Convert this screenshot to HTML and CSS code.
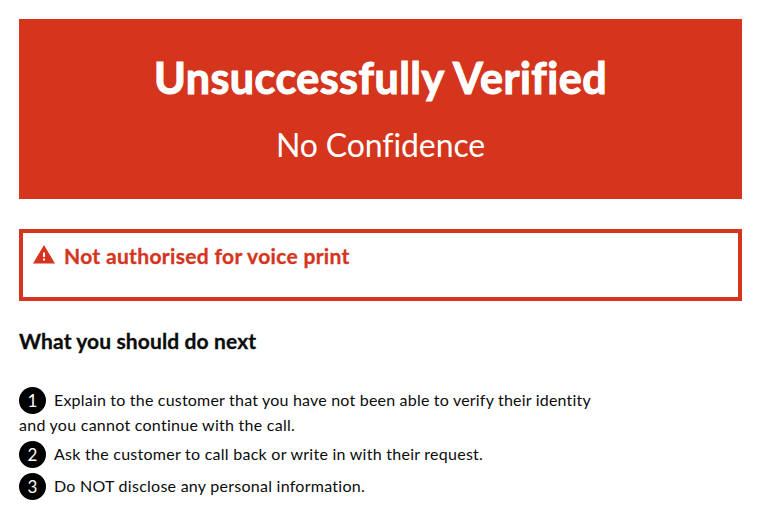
FILE: index.html
```html
<!DOCTYPE html>
<html lang="en">
<head>
<meta charset="utf-8">
<title>Verification result</title>
<link rel="stylesheet" href="styles.css">
</head>
<body>
<main>
<section class="panel">
<h1>Unsuccessfully Verified</h1>
<p>No Confidence</p>
</section>
<section class="notice">
<svg class="warning" viewBox="0 0 22 19" aria-hidden="true"><path fill="#d4351c" d="M11 0 22 18.5H0z"/><path fill="#fff" d="M10 7.5h2v4.5h-2zM10 13.5h2v2h-2z"/></svg>
<strong>Not authorised for voice print</strong>
</section>
<h2>What you should do next</h2>
<ol>
<li><span class="num">1</span><span class="first">Explain to the customer that you have not been able to verify their identity</span><br>and you cannot continue with the call.</li>
<li><span class="num">2</span>Ask the customer to call back or write in with their request.</li>
<li><span class="num">3</span>Do NOT disclose any personal information.</li>
</ol>
</main>
</body>
</html>
```
FILE: styles.css
```css
* { box-sizing: border-box; }
body { margin: 0; background: #fff; color: #0b0c0c; font-family: Lato, "Open Sans", sans-serif; font-variant-ligatures: none; }
main { padding: 19px 22px 0 19px; }
h1, h2, p, ol { margin: 0; padding: 0; }
.panel { height: 180px; padding-top: 31px; background: #d4351c; color: #fff; text-align: center; }
.panel h1 { font-size: 43px; line-height: 55px; font-weight: 700; letter-spacing: .5px; -webkit-text-stroke: 1.1px #fff; }
.panel p { margin-top: 20px; font-size: 32px; line-height: 40px; letter-spacing: -.1px; }
.notice { display: flex; height: 72px; margin-top: 30px; padding: 9px 10px; border: 4px solid #d4351c; color: #d4351c; font-size: 21px; line-height: 28px; letter-spacing: .33px; -webkit-text-stroke: .3px; }
.warning { width: 22px; height: 19px; margin: 3px 9px 0 0; }
h2 { margin-top: 26px; font-size: 21px; line-height: 28px; letter-spacing: .12px; -webkit-text-stroke: .3px; }
ol { margin-top: 32px; list-style: none; font-size: 16px; line-height: 21px; letter-spacing: .26px; }
li { min-height: 32px; }
li:first-child { margin-bottom: 6px; }
.first { letter-spacing: .2px; }
.num { display: inline-block; width: 27px; height: 27px; margin-right: 8px; border-radius: 50%; background: #000; color: #fff; font-size: 17px; text-align: center; line-height: 27px; vertical-align: -1px; }
```
